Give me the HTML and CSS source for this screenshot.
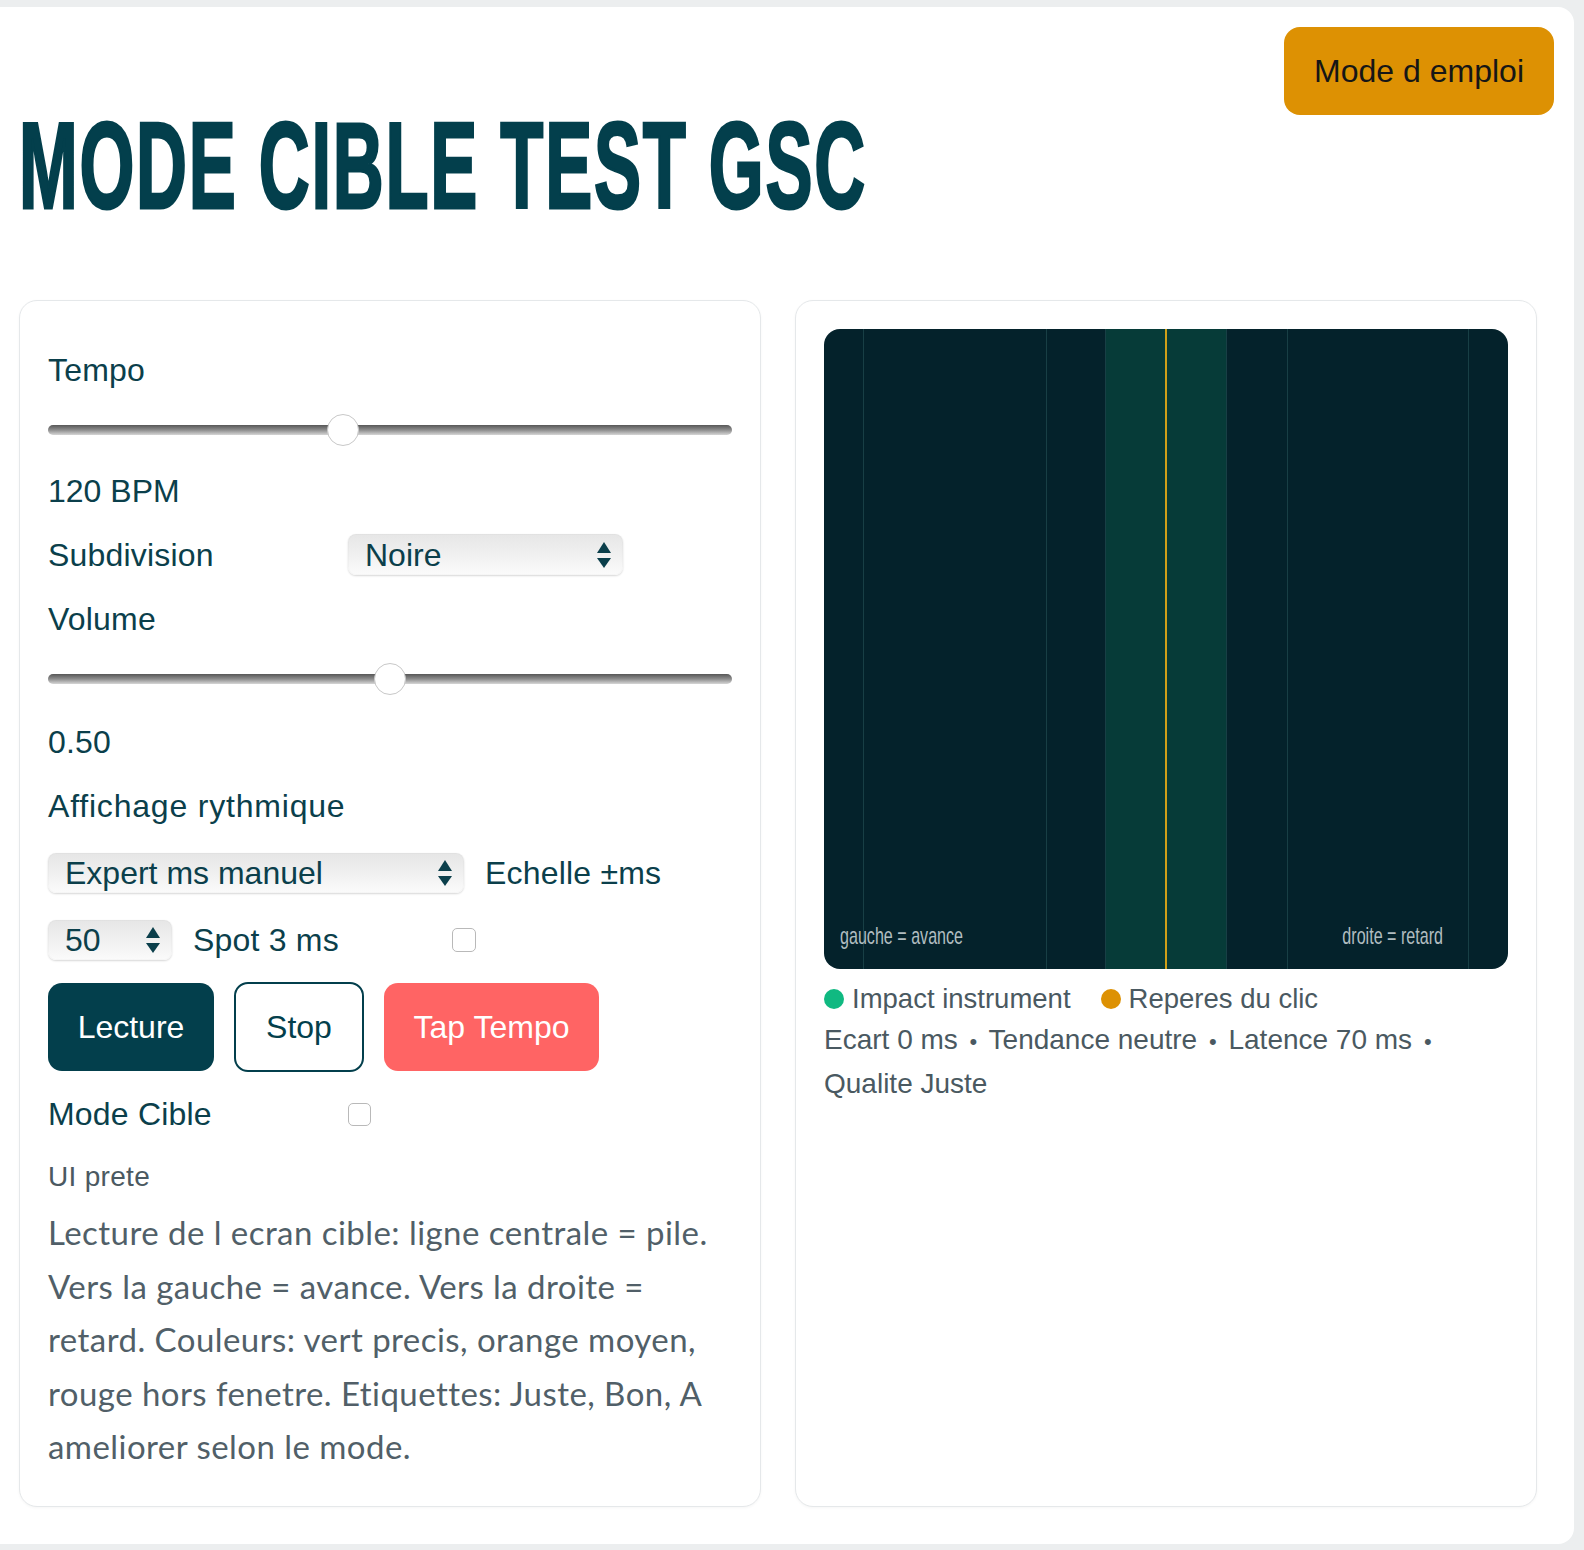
FILE: index.html
```html
<!DOCTYPE html>
<html lang="fr">
<head>
<meta charset="utf-8">
<title>Mode Cible Test GSC</title>
<link rel="stylesheet" href="styles.css">
</head>
<body>
<div class="page">
  <header class="topbar">
    <h1 class="title"><span class="title-text">MODE CIBLE TEST GSC</span></h1>
    <button class="help-btn" type="button">Mode d emploi</button>
  </header>

  <main class="panels">
    <section class="card controls">
      <label class="lbl">Tempo</label>
      <input type="range" class="slider s-tempo" min="30" max="240" value="120">
      <div class="lbl v-bpm">120 BPM</div>

      <div class="grid-row r-sub">
        <span class="lbl">Subdivision</span>
        <span class="sel-wrap w-sub">
          <select class="sel"><option>Noire</option></select>
          <span class="arrows"><i class="up"></i><i class="down"></i></span>
        </span>
      </div>

      <label class="lbl l-vol">Volume</label>
      <input type="range" class="slider s-vol" min="0" max="1" step="0.01" value="0.5">
      <div class="lbl v-vol">0.50</div>

      <div class="lbl l-aff">Affichage rythmique</div>

      <div class="inline-row r-mode">
        <span class="sel-wrap w-mode">
          <select class="sel"><option>Expert ms manuel</option></select>
          <span class="arrows"><i class="up"></i><i class="down"></i></span>
        </span>
        <span class="lbl">Echelle ±ms</span>
      </div>

      <div class="inline-row r-num">
        <span class="sel-wrap w-num">
          <input class="sel num" type="text" value="50">
          <span class="arrows"><i class="up"></i><i class="down"></i></span>
        </span>
        <span class="lbl l-spot">Spot 3 ms</span>
        <input type="checkbox" class="chk">
      </div>

      <div class="btn-row">
        <button class="btn btn-play" type="button">Lecture</button>
        <button class="btn btn-stop" type="button">Stop</button>
        <button class="btn btn-tap" type="button">Tap Tempo</button>
      </div>

      <div class="grid-row r-cible">
        <span class="lbl">Mode Cible</span>
        <input type="checkbox" class="chk">
      </div>

      <div class="status">UI prete</div>

      <p class="help-text">Lecture de l ecran cible: ligne centrale = pile. Vers la gauche = avance. Vers la droite = retard. Couleurs: vert precis, orange moyen, rouge hors fenetre. Etiquettes: Juste, Bon, A ameliorer selon le mode.</p>
    </section>

    <section class="card viz">
      <div class="target">
        <svg class="target-svg" viewBox="0 0 684 640" width="684" height="640">
          <rect x="0" y="0" width="684" height="640" fill="#04222b"/>
          <rect x="281" y="0" width="122" height="640" fill="#063b38"/>
          <g stroke="#183f45" stroke-width="1">
            <line x1="39.5" y1="0" x2="39.5" y2="640"/>
            <line x1="222.5" y1="0" x2="222.5" y2="640"/>
            <line x1="281.5" y1="0" x2="281.5" y2="640"/>
            <line x1="402.5" y1="0" x2="402.5" y2="640"/>
            <line x1="463.5" y1="0" x2="463.5" y2="640"/>
            <line x1="644.5" y1="0" x2="644.5" y2="640"/>
          </g>
          <line x1="342" y1="0" x2="342" y2="640" stroke="#cf9f18" stroke-width="2"/>
          <text class="cv-label" transform="translate(16 615) scale(0.7 1)">gauche = avance</text>
          <text class="cv-label" text-anchor="end" transform="translate(619 615) scale(0.7 1)">droite = retard</text>
        </svg>
      </div>
      <div class="legend">
        <span class="leg-item"><i class="dot dot-green"></i>Impact instrument</span>
        <span class="leg-item"><i class="dot dot-orange"></i>Reperes du clic</span>
      </div>
      <p class="stats">Ecart 0 ms <span class="sep">•</span> Tendance neutre <span class="sep">•</span> Latence 70 ms <span class="sep">•</span> Qualite Juste</p>
    </section>
  </main>
</div>
</body>
</html>
```

FILE: styles.css
```css
* {
  box-sizing: border-box;
}

html, body {
  margin: 0;
  padding: 0;
}

body {
  background: #eceeef;
  font-family: "Liberation Sans", Arial, sans-serif;
  color: #0b3f4b;
}

.page {
  width: 1574px;
  margin: 7px 0;
  background: #ffffff;
  border-radius: 0 16px 16px 0;
  padding: 20px 20px 37px 19px;
}

/* Header */
.topbar {
  display: flex;
  justify-content: space-between;
  align-items: flex-start;
}

.title {
  margin: 78px 0 0 0;
  width: 860px;
  flex-shrink: 0;
  font-size: 122px;
  line-height: 122px;
  font-weight: 700;
  color: #033f4c;
  white-space: nowrap;
}

.title-text {
  display: inline-block;
  letter-spacing: 3px;
  transform: scaleX(0.578);
  transform-origin: 0 0;
  -webkit-text-stroke: 3px #033f4c;
}

.help-btn {
  font-family: inherit;
  font-size: 32px;
  line-height: 32px;
  padding: 28px 30px;
  border: 0;
  border-radius: 16px;
  background: #dd9103;
  color: #161616;
  cursor: pointer;
}

/* Panels */
.panels {
  display: grid;
  grid-template-columns: 742px 742px;
  column-gap: 34px;
  margin-top: 73px;
}

.card {
  background: #fff;
  border: 1px solid #e5e8ea;
  border-radius: 18px;
  box-shadow: 0 1px 3px rgba(0, 0, 0, 0.04);
}

.controls {
  display: flex;
  flex-direction: column;
  align-items: stretch;
  padding: 51px 28px 32px 28px;
}

.lbl {
  display: block;
  font-size: 32px;
  letter-spacing: 0.2px;
  line-height: 36px;
  color: #0b3f4b;
  white-space: nowrap;
}

.slider {
  -webkit-appearance: none;
  appearance: none;
  display: block;
  width: 100%;
  height: 32px;
  margin: 0;
  padding: 0;
  background: transparent;
}

.slider::-webkit-slider-runnable-track {
  height: 10px;
  border-radius: 5px;
  background: linear-gradient(to bottom, #575757, #8d8d8d 50%, #d6d6d6);
}

.slider::-webkit-slider-thumb {
  -webkit-appearance: none;
  appearance: none;
  width: 32px;
  height: 32px;
  margin-top: -11px;
  border-radius: 50%;
  background: #ffffff;
  border: 1px solid #c8c8c8;
}

.s-tempo { margin-top: 26px; }
.v-bpm { margin-top: 27px; letter-spacing: 0; }
.r-sub { margin-top: 25px; }
.l-vol { margin-top: 26px; }
.s-vol { margin-top: 26px; }
.v-vol { margin-top: 29px; }
.l-aff { margin-top: 28px; letter-spacing: 0.8px; }
.r-mode { margin-top: 29px; }
.r-num { margin-top: 27px; }
.btn-row { margin-top: 23px; }
.r-cible { margin-top: 24px; }

.grid-row {
  display: grid;
  grid-template-columns: 300px 1fr;
  align-items: center;
}

.inline-row {
  display: flex;
  align-items: center;
  gap: 21px;
}

.sel-wrap {
  position: relative;
  display: inline-block;
  flex-shrink: 0;
}

.w-sub { width: 275px; height: 41px; }
.w-mode { width: 416px; height: 40px; }
.w-num { width: 124px; height: 40px; }

.sel {
  -webkit-appearance: none;
  appearance: none;
  display: block;
  width: 100%;
  height: 100%;
  margin: 0;
  border: 0;
  border-radius: 8px;
  padding: 0 40px 0 17px;
  font-family: inherit;
  font-size: 32px;
  color: #0b3f4b;
  background: linear-gradient(to bottom, #e6e6e6, #f1f1f1 55%, #fbfbfb);
  box-shadow: 0 1px 2px rgba(0, 0, 0, 0.16), inset 0 0 0 1px rgba(0, 0, 0, 0.02);
  outline: none;
}

.num {
  padding-right: 30px;
}

.arrows {
  position: absolute;
  right: 12px;
  top: 50%;
  transform: translateY(-50%);
  display: flex;
  flex-direction: column;
  align-items: center;
  gap: 5px;
  pointer-events: none;
}

.arrows .up {
  display: block;
  width: 0;
  height: 0;
  border-left: 7px solid transparent;
  border-right: 7px solid transparent;
  border-bottom: 11px solid #0b3f4b;
}

.arrows .down {
  display: block;
  width: 0;
  height: 0;
  border-left: 7px solid transparent;
  border-right: 7px solid transparent;
  border-top: 10px solid #0b3f4b;
}

.l-spot {
  width: 238px;
}

.chk {
  -webkit-appearance: none;
  appearance: none;
  width: 24px;
  height: 24px;
  margin: 0;
  border: 1px solid #b9b9b9;
  border-radius: 5px;
  background: #ffffff;
}

.r-cible .chk {
  width: 23px;
  height: 23px;
}

.btn-row {
  display: flex;
  gap: 20px;
}

.btn {
  height: 88px;
  border-radius: 14px;
  font-family: inherit;
  font-size: 32px;
  padding: 0;
  text-align: center;
  cursor: pointer;
}

.btn-play {
  width: 166px;
  background: #033f4c;
  color: #ffffff;
  border: 0;
}

.btn-stop {
  width: 130px;
  height: 90px;
  margin-top: -1px;
  background: #ffffff;
  color: #033f4c;
  border: 2px solid #033f4c;
}

.btn-tap {
  width: 215px;
  background: #ff6464;
  color: #ffffff;
  border: 0;
}

.status {
  margin-top: 27px;
  font-size: 28px;
  letter-spacing: 0.3px;
  line-height: 36px;
  color: #4b5961;
}

.help-text {
  margin: 11px 0 0 0;
  font-family: "Lato", "Liberation Sans", sans-serif;
  font-size: 33px;
  letter-spacing: 0.45px;
  line-height: 53.5px;
  color: #515f68;
}

/* Visual panel */
.viz {
  padding: 28px;
}

.target {
  width: 684px;
  height: 640px;
  border-radius: 16px;
  overflow: hidden;
}

.target-svg {
  display: block;
}

.cv-label {
  font-family: "Liberation Sans", Arial, sans-serif;
  font-size: 23px;
  fill: #b1bdc0;
}

.legend {
  display: flex;
  align-items: center;
  gap: 30px;
  margin-top: 12px;
  font-size: 27.5px;
  line-height: 36px;
  color: #4a5961;
}

.leg-item {
  display: flex;
  align-items: center;
  gap: 8px;
}

.dot {
  display: block;
  width: 20px;
  height: 20px;
  border-radius: 50%;
}

.dot-green { background: #10b981; }
.dot-orange { background: #dd9103; }

.stats {
  margin: 2px 0 0 0;
  font-size: 28px;
  line-height: 42px;
  color: #4a5961;
}

.sep {
  display: inline-block;
  padding: 0 4px;
  font-size: 22px;
}
```
